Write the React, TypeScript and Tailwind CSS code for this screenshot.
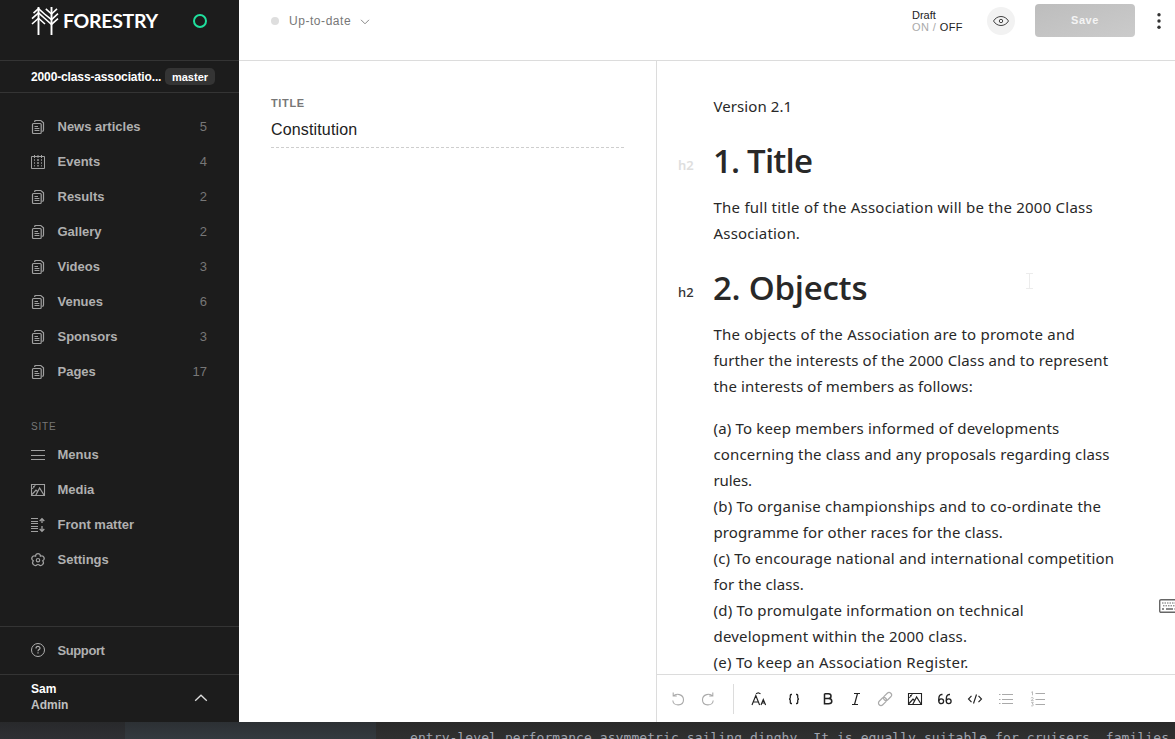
import React from "react";

type IconProps = { children: React.ReactNode; className?: string };

function Icon({ children, className = "size-4" }: IconProps) {
  return (
    <svg viewBox="0 0 16 16" fill="none" stroke="currentColor" className={`shrink-0 ${className}`}>
      {children}
    </svg>
  );
}

const DocsIcon = () => (
  <Icon>
    <path d="M4.7 3V2.5Q4.7 1.5 5.7 1.5H10.8L13.5 3.8V11Q13.5 12.4 12.2 12.4" strokeWidth="1.2" />
    <rect x="2.5" y="4.5" width="8.7" height="10" rx="1" strokeWidth="1.2" />
    <path d="M4.5 7.5H8M4.5 9.5H9.4M4.5 11.5H9.4" strokeWidth="1.2" />
  </Icon>
);
const CalendarIcon = () => (
  <Icon>
    <path d="M1.5 2.5H14.5V14.5H1.5Z" />
    <path d="M4.5 1V4M8 1V4M11.5 1V4" />
    <path d="M4.5 5V12.5M7.5 5V12.5M8.5 5V12.5M11.5 5V12.5" strokeDasharray="2 1" opacity="0.7" />
  </Icon>
);
const MenuIcon = () => (
  <Icon>
    <path d="M1 3.5H15M1 8.5H15M1 12.5H15" strokeWidth="1.2" />
  </Icon>
);
const ImageIcon = () => (
  <Icon>
    <path d="M1.5 2.5H14.5V13.5H1.5Z" strokeWidth="1.1" />
    <path d="M2 12.5L6 8L7.5 9.5M5.8 13.2L9.6 6L14 13" strokeWidth="1.2" />
    <path d="M2 6.5L3.5 6L5.2 3M3 4.5H4" />
  </Icon>
);
const FrontMatterIcon = () => (
  <Icon>
    <path d="M1 1.5H8M1 4.5H8M1 6.5H8M1 9.5H8M1 11.5H8M1 14.5H8" strokeWidth="1.1" />
    <path d="M12 6V2M9.7 4L12 1.7L14.3 4M12 9V14M9.7 12L12 14.3L14.3 12" strokeWidth="1.3" />
  </Icon>
);
const FlowerIcon = () => (
  <Icon>
    <path
      d="M5.6 4.2C5.4 .7 10.6 .7 10.4 4.2C13.8 3 15.7 7 12.7 8.8C15 11.6 11.3 15 8.9 12.8Q8 12.2 7.1 12.8C4.7 15 1 11.6 3.3 8.8C.3 7 2.2 3 5.6 4.2Z"
      strokeWidth="1.2"
    />
    <circle cx="8" cy="8.2" r="1.7" strokeWidth="1.2" />
  </Icon>
);

const collections = [
  ["News articles", "5"],
  ["Events", "4"],
  ["Results", "2"],
  ["Gallery", "2"],
  ["Videos", "3"],
  ["Venues", "6"],
  ["Sponsors", "3"],
  ["Pages", "17"],
];

function NavRow({ icon, label, count }: { icon: React.ReactNode; label: string; count?: string }) {
  return (
    <a className="flex h-[35px] items-center pr-8 pl-[30px] text-[13px] font-bold text-[#b0b0b0]">
      <span className="flex h-[35px] w-[27.5px] items-start pt-[10px] text-[#a0a0a0]">{icon}</span>
      <span className="grow">{label}</span>
      {count && <span className="text-[13px] font-normal text-[#777]">{count}</span>}
    </a>
  );
}

function Sidebar() {
  return (
    <aside className="flex h-[722px] w-[239px] shrink-0 flex-col bg-[#1c1c1c]">
      <div className="flex h-[61px] border-b border-[#343434] pl-[30px]">
        <svg viewBox="0 0 28 28" className="mt-[7px] ml-px h-7 w-7 shrink-0" fill="none" stroke="#fff" strokeWidth="1.6">
          <path d="M7.5 0V28M20.5 0V28" strokeWidth="1.9" />
          <path d="M2.5 6.2L7.5 1.6L13.5 7M1 11.7L7.5 5.8L13.8 11.5L20.5 17.4L27 11.6M1 17L7.5 11.2L14 17M14.8 1.8L20.5 7L26 1.8M13.5 7L20.5 12.6L27 6.6" />
        </svg>
        <span className="mt-[9px] ml-[4px] w-[95px] font-['Lato'] text-[19.5px] leading-6 font-bold tracking-[-0.3px] text-white">FORESTRY</span>
        <span className="mt-[14px] ml-[35px] size-[14px] rounded-full border-2 border-[#1fe09d]" />
      </div>
      <div className="flex h-8 items-center border-b border-[#343434] pl-[31px] text-white">
        <span className="w-[130px] whitespace-nowrap text-[12px] font-bold tracking-[-0.13px]">2000-class-associatio...</span>
        <span className="ml-1 flex h-[17px] w-[50px] items-center justify-center rounded-[5px] bg-[#343434] pt-px text-[11px] font-bold">master</span>
      </div>
      <nav className="mt-4">
        {collections.map(([label, count]) => (
          <NavRow key={label} label={label} count={count} icon={label === "Events" ? <CalendarIcon /> : <DocsIcon />} />
        ))}
      </nav>
      <div className="mt-[28px] mb-[2px] flex h-[18px] items-center pl-[31px] text-[10px] tracking-[0.8px] text-[#777]">SITE</div>
      <nav>
        <NavRow icon={<MenuIcon />} label="Menus" />
        <NavRow icon={<ImageIcon />} label="Media" />
        <NavRow icon={<FrontMatterIcon />} label="Front matter" />
        <NavRow icon={<FlowerIcon />} label="Settings" />
      </nav>
      <div className="mt-auto flex h-12 items-center border-t border-[#343434] pl-[30px] text-[13px] font-bold text-[#b0b0b0]">
        <span className="w-[27.5px] pb-px">
          <Icon>
            <circle cx="8" cy="8" r="6.5" />
            <path d="M6 6.4C6 3.8 10 3.9 10 6.2C10 7.7 8 7.5 8 9.2M8 10.3V11.6" strokeWidth="1.2" />
          </Icon>
        </span>
        <span className="tracking-[-0.4px]">Support</span>
      </div>
      <div className="flex h-12 justify-between border-t border-[#343434] pr-[31px] pl-[31px]">
        <div className="pt-[6px] text-[12px] leading-4 font-bold text-[#c0c0c0]">
          <div className="text-white">Sam</div>
          <div>Admin</div>
        </div>
        <svg viewBox="0 0 14 8" className="mt-[19px] h-2 w-[14px]" fill="none" stroke="#ddd" strokeWidth="1.3">
          <path d="M1.2 6.8L7 1.2L12.8 6.8" />
        </svg>
      </div>
    </aside>
  );
}

function TopBar() {
  return (
    <header className="flex h-[61px] shrink-0 border-b border-[#dcdcdc] pl-8">
      <span className="mt-[17px] size-2 rounded-full bg-[#dedede]" />
      <span className="mt-[12px] ml-[10px] w-[63px] text-[12px] leading-[18px] tracking-[0.55px] whitespace-nowrap text-[#777]">Up-to-date</span>
      <svg viewBox="0 0 10 6" className="mt-[19px] ml-[8px] h-[6px] w-[10px]" fill="none" stroke="#888">
        <path d="M1 .8L5 4.8L9 .8" />
      </svg>
      <div className="mt-[9px] ml-auto w-[75px] text-[11px] leading-3 text-[#222]">
        <div>Draft</div>
        <div className="tracking-[0.4px]">
          <span className="text-[#aaa]">ON / </span>OFF
        </div>
      </div>
      <div className="mt-[7px] flex size-7 items-center justify-center rounded-full bg-[#f2f2f2] text-[#444]">
        <Icon>
          <path d="M.5 8C4 2 12 2 15.5 8C12 14 4 14 .5 8Z" />
          <circle cx="8" cy="8" r="1.7" />
        </Icon>
      </div>
      <button className="mt-1 ml-5 flex h-[33px] w-[100px] items-center justify-center rounded bg-linear-to-br from-[#bdbdbd] to-[#cbcbcb] text-[11px] font-bold tracking-[0.6px] text-[#f4f4f4]">
        Save
      </button>
      <svg viewBox="0 0 4 18" className="mt-[12px] mr-[14px] ml-[22px] h-[18px] w-1" fill="#333">
        <circle cx="2" cy="2.7" r="1.7" />
        <circle cx="2" cy="9" r="1.7" />
        <circle cx="2" cy="15.2" r="1.7" />
      </svg>
    </header>
  );
}

type Line = [string, string];
const intro: Line[] = [["Version 2.1", "tracking-[0.08px]"]];
const titleText: Line[] = [
  ["The full title of the Association will be the 2000 Class", "tracking-[0.23px]"],
  ["Association.", "tracking-[0.2px]"],
];
const objects: Line[] = [
  ["The objects of the Association are to promote and", "tracking-[0.22px]"],
  ["further the interests of the 2000 Class and to represent", "tracking-[0.14px]"],
  ["the interests of members as follows:", "tracking-[0.12px]"],
];
const clauses: Line[] = [
  ["(a) To keep members informed of developments", "tracking-[0.17px]"],
  ["concerning the class and any proposals regarding class", "tracking-[0.15px]"],
  ["rules.", "tracking-[-0.1px]"],
  ["(b) To organise championships and to co-ordinate the", "tracking-[0.23px]"],
  ["programme for other races for the class.", "tracking-[0.11px]"],
  ["(c) To encourage national and international competition", "tracking-[0.17px]"],
  ["for the class.", "tracking-[0.08px]"],
  ["(d) To promulgate information on technical", "tracking-[0.2px]"],
  ["development within the 2000 class.", "tracking-[0.19px]"],
  ["(e) To keep an Association Register.", "tracking-[0.28px]"],
];

function Paragraph({ lines }: { lines: Line[] }) {
  return (
    <p className="ml-[56.5px] text-[15px] leading-[26px] whitespace-nowrap">
      {lines.map(([text, tracking]) => (
        <span key={text} className={`block ${tracking}`}>{text}</span>
      ))}
    </p>
  );
}

function Heading({ text, tone, tracking }: { text: string; tone: string; tracking: string }) {
  return (
    <div className="flex h-[75px] items-start pt-[18px]">
      <span className={`mt-[20px] ml-[21px] w-[35px] text-[13px] leading-4 ${tone}`}>h2</span>
      <h2 className={`font-['Open_Sans'] text-[33px] leading-[48px] font-semibold whitespace-nowrap ${tracking}`}>{text}</h2>
    </div>
  );
}

function Tool({ children, className = "text-[#222]" }: { children: React.ReactNode; className?: string }) {
  return <span className={`flex w-[30px] shrink-0 items-center justify-center ${className}`}>{children}</span>;
}

function Toolbar() {
  return (
    <div className="flex h-12 shrink-0 items-center border-t border-[#dcdcdc] pt-px pl-[6px]">
      <Tool className="text-[#aaa]">
        <Icon>
          <path d="M3.2 1.5V5H6.8M3.4 5C6 2 13.5 3 13.5 8.8C13.5 15.5 3.2 15.5 2.8 9.5" strokeWidth="1.1" />
        </Icon>
      </Tool>
      <Tool className="text-[#aaa]">
        <Icon>
          <path d="M12.8 1.5V5H9.2M12.6 5C10 2 2.5 3 2.5 8.8C2.5 15.5 12.8 15.5 13.2 9.5" strokeWidth="1.1" />
        </Icon>
      </Tool>
      <i className="ml-[10px] h-[30px] w-px bg-[#dcdcdc]" />
      <Tool className="ml-[10px] text-[#222]">
        <Icon>
          <path d="M1 14L4.8 4.5L8.6 14M2.3 11H7.3M10 14L12.3 8.5L14.6 14M10.8 12H13.8M5 2.8L7.2 1.8L9.5 2.8" strokeWidth="1.15" />
        </Icon>
      </Tool>
      <Tool className="ml-[5px] text-[#222]">
        <Icon>
          <path d="M6 3.5H5Q4.3 3.5 4.3 4.5V6.5Q4.3 8 3 8Q4.3 8 4.3 9.5V11.5Q4.3 12.5 5 12.5H6M10 3.5H11Q11.7 3.5 11.7 4.5V6.5Q11.7 8 13 8Q11.7 8 11.7 9.5V11.5Q11.7 12.5 11 12.5H10" strokeWidth="1.3" />
        </Icon>
      </Tool>
      <Tool className="ml-[4px] text-[#222]">
        <Icon>
          <path d="M4.5 2.8H8.5Q11 2.8 11 5.1Q11 7.6 8.5 7.6H4.5M8.5 7.6Q11.8 7.6 11.8 10.3Q11.8 12.8 8.5 12.8H4.5V2.8" strokeWidth="1.5" />
        </Icon>
      </Tool>
      <Tool className="-ml-[2px] text-[#222]">
        <Icon>
          <path d="M6 2.5H12M4 13.5H10M9.5 2.5L6.5 13.5" strokeWidth="1.2" />
        </Icon>
      </Tool>
      <Tool className="-ml-[1px] text-[#aaa]">
        <Icon>
          <g transform="rotate(-45 8 8)" strokeWidth="1.2">
            <rect x="-.2" y="5.5" width="9.2" height="5" rx="2.5" />
            <rect x="7" y="5.5" width="9.2" height="5" rx="2.5" />
          </g>
        </Icon>
      </Tool>
      <Tool><ImageIcon /></Tool>
      <Tool>
        <Icon>
          <path d="M5.5 3.5H4.7Q1.8 3.7 1.8 8V10.3M13 3.5H12.2Q9.3 3.7 9.3 8V10.3" strokeWidth="1.3" />
          <circle cx="4.2" cy="10.3" r="2.4" strokeWidth="1.3" />
          <circle cx="11.7" cy="10.3" r="2.4" strokeWidth="1.3" />
        </Icon>
      </Tool>
      <Tool>
        <Icon>
          <path d="M4.5 4.8L1.5 8L4.5 11.2M11.5 4.8L14.5 8L11.5 11.2M9.5 3.5L6.5 12.5" strokeWidth="1.15" />
        </Icon>
      </Tool>
      <Tool className="ml-px text-[#aaa]">
        <Icon>
          <path d="M4 3.5H15M4 8.5H15M4 12.5H15M1 3.5H2.5M1 8.5H2.5M1 12.5H2.5" strokeWidth="1.2" />
        </Icon>
      </Tool>
      <Tool className="ml-[2px] text-[#aaa]">
        <Icon>
          <path d="M5.5 2.5H15M5.5 8.5H15M5.5 13.5H15" strokeWidth="1.2" />
          <path d="M1.3 1.3L2.5 .7V4.3M1 7.2C1.5 6 3.5 6.3 3.2 7.5L1.2 9.7H3.7M1.2 11.6H3.3L2.2 13C4.3 13 3.5 15.7 1.2 14.8" strokeWidth=".8" />
        </Icon>
      </Tool>
    </div>
  );
}

export default function App() {
  return (
    <div className="flex h-[739px] w-[1175px] flex-col overflow-hidden bg-[#2d2d2f] font-['Liberation_Sans',sans-serif]">
      <div className="flex h-[722px] shrink-0">
        <Sidebar />
        <main className="flex w-[936px] flex-col bg-white">
          <TopBar />
          <div className="flex h-[661px]">
            <section className="w-[417px] pt-9 pl-8">
              <div className="text-[11px] leading-3 font-bold tracking-[0.65px] text-[#777]">TITLE</div>
              <div className="mt-[11px] text-[16px] leading-5 tracking-[0.15px] text-[#222]">Constitution</div>
              <svg viewBox="0 0 353 1" className="mt-[7px] h-px w-[353px]" stroke="#cecece">
                <path d="M0 .5H353" strokeDasharray="3 2" />
              </svg>
            </section>
            <section className="relative flex w-[519px] flex-col border-l border-[#dcdcdc]">
              <div className="h-[613px] overflow-hidden pt-8 font-['Noto_Sans',sans-serif] text-[#282828]">
                <Paragraph lines={intro} />
                <Heading text="1. Title" tone="font-semibold text-[#dedede]" tracking="tracking-[-0.8px]" />
                <Paragraph lines={titleText} />
                <Heading text="2. Objects" tone="font-medium text-[#333]" tracking="tracking-[-0.25px]" />
                <Paragraph lines={objects} />
                <div className="h-4" />
                <Paragraph lines={clauses} />
              </div>
              <Toolbar />
              <svg viewBox="0 0 7 16" className="absolute top-[212px] left-[369px] h-4 w-[7px]" fill="none" stroke="#ececec">
                <path d="M0 .5H7M3.5 .5V15.5M0 15.5H7" />
              </svg>
              <svg viewBox="0 0 24 14" className="absolute top-[538px] left-[502px] h-[14px] w-6 max-w-none" fill="none" stroke="#666">
                <rect x=".7" y=".7" width="22" height="12.6" rx="1.3" fill="#fff" strokeWidth="1.4" />
                <path d="M3 4H21M4 6.8H21" strokeDasharray="1.5 1" />
                <path d="M3 10H5M7 10H14M15.5 10H17" strokeWidth="1.4" />
              </svg>
            </section>
          </div>
        </main>
      </div>
      <footer className="flex h-[17px] shrink-0 overflow-hidden bg-linear-to-b from-[#292929] to-[#303030]">
        <div className="h-full w-[125px] shrink-0 bg-linear-to-b from-[#28292b] to-[#2f3034]" />
        <div className="h-full w-[251px] shrink-0 bg-linear-to-b from-[#2c3034] to-[#343a3f]" />
        <div className="pt-[7px] pl-[34px] font-['DejaVu_Sans_Mono',monospace] text-[13px] leading-[18px] tracking-[0.08px] whitespace-pre text-[#a0a5b0]">
          entry-level performance asymmetric sailing dinghy. It is equally suitable for cruisers, families
        </div>
      </footer>
    </div>
  );
}
